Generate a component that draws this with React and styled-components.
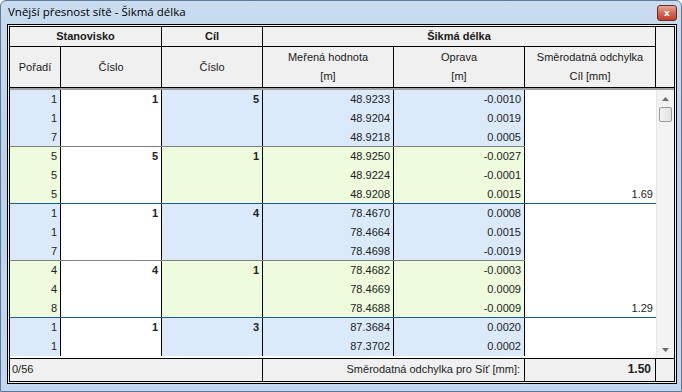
import React from 'react';
import styled, { createGlobalStyle } from 'styled-components';

const GlobalStyle = createGlobalStyle`
  html, body { margin: 0; padding: 0; }
  body {
    width: 682px;
    height: 392px;
    overflow: hidden;
    font-family: "Liberation Sans", "DejaVu Sans", sans-serif;
    font-size: 11px;
    color: #000;
  }
`;

const COLS = '51px 101px 101px 131px 131px 131px';
const TINT = { blue: '#dbeafb', green: '#eefbdd' };

const Window = styled.div`
  width: 682px;
  height: 392px;
  box-sizing: border-box;
  display: flex;
  flex-direction: column;
  border: 1px solid #5d7a99;
  border-radius: 6px 6px 0 0;
  background: linear-gradient(180deg, #c9dbef 0%, #bcd2ec 40%, #c3d7ee 100%);
`;

const TitleBar = styled.div`
  height: 22px;
  display: flex;
  align-items: center;
  justify-content: space-between;
  padding: 0 4px 0 7px;
  font-family: "Open Sans", "Liberation Sans", sans-serif;
  font-size: 11.5px;
  color: #000;
`;

const CloseButton = styled.div`
  width: 20px;
  height: 16px;
  margin-top: 2px;
  border: 1px solid #6d2a22;
  border-radius: 3px;
  box-sizing: border-box;
  background: linear-gradient(180deg, #e9a796 0%, #d26a55 50%, #c1412a 100%);
  display: flex;
  align-items: center;
  justify-content: center;
  color: #fff;
  font-family: "DejaVu Sans", sans-serif;
  font-size: 9px;
  font-weight: bold;
`;

const Client = styled.div`
  flex: 1;
  padding: 2px 7px 7px 6px;
  display: flex;
`;

const Frame = styled.div`
  flex: 1;
  border: 1px solid #000;
  padding: 1px;
  background: #f0f0f0;
  display: flex;
`;

const Table = styled.div`
  flex: 1;
  border: 1px solid #000;
  display: flex;
  flex-direction: column;
  background: #f0f0f0;
`;

const Header = styled.div`
  display: grid;
  grid-template-columns: ${COLS} 1fr;
  grid-template-rows: 20px 40px;
  border-bottom: 1px solid #000;
`;

const HeadCell = styled.div`
  display: flex;
  flex-direction: column;
  align-items: center;
  justify-content: center;
  border-right: 1px solid #000;
  border-bottom: ${p => (p.$top ? '1px solid #000' : 'none')};
  font-weight: ${p => (p.$bold ? 'bold' : 'normal')};
  grid-column: ${p => p.$col || 'auto'};
  grid-row: ${p => p.$row || 'auto'};
  line-height: 19px;
  color: #1a1a1a;
`;

const HeadEnd = styled.div`
  grid-column: 7;
  grid-row: 1 / 3;
`;

const Body = styled.div`
  height: 268px;
  border-top: 2px solid #a0a0a0;
  display: flex;
  overflow: hidden;
`;

const Rows = styled.div`
  width: 646px;
  background: #fff;
`;

const Group = styled.div`
  display: grid;
  grid-template-columns: ${COLS};
  grid-auto-rows: 19px;
  position: relative;
  &::after {
    content: '';
    position: absolute;
    left: 0;
    bottom: 0;
    height: 1px;
    width: ${p => (p.$sep === 'blue' ? '646px' : p.$sep === 'gray' ? '515px' : '0')};
    background: ${p => (p.$sep === 'blue' ? '#1b5a96' : '#808080')};
  }
`;

const Cell = styled.div`
  background: ${p => (p.$white ? '#fff' : TINT[p.$tint])};
  border-right: ${p => (p.$last ? 'none' : '1px solid #000')};
  text-align: right;
  padding: 0 3px 0 2px;
  line-height: 19px;
  font-weight: ${p => (p.$bold ? 'bold' : 'normal')};
  grid-column: ${p => p.$col};
  grid-row: ${p => p.$row || 'auto'};
  white-space: nowrap;
  color: #222;
`;

const Scrollbar = styled.div`
  width: 17px;
  background: #f3f3f3;
  border-left: 1px solid #e6e6e6;
  display: flex;
  flex-direction: column;
  align-items: center;
`;

const Arrow = styled.div`
  height: 17px;
  display: flex;
  align-items: center;
  justify-content: center;
`;

const Thumb = styled.div`
  width: 13px;
  height: 15px;
  border: 1px solid #9a9a9a;
  border-radius: 2px;
  background: linear-gradient(90deg, #f4f4f4, #e2e2e2);
  box-sizing: border-box;
`;

const Track = styled.div`
  flex: 1;
`;

const Footer = styled.div`
  display: grid;
  grid-template-columns: 253px 262px 131px 1fr;
  height: 22px;
  border-top: 1px solid #000;
`;

const FootCell = styled.div`
  border-right: ${p => (p.$last ? 'none' : '1px solid #000')};
  text-align: ${p => p.$align || 'left'};
  font-weight: ${p => (p.$bold ? 'bold' : 'normal')};
  font-size: ${p => (p.$bold ? '12px' : '11px')};
  line-height: 21px;
  padding: 0 4px 0 2px;
  color: #222;
`;

const groups = [
  { st: 1, cil: 5, tint: 'blue', sep: 'gray', sd: '', rows: [[1, '48.9233', '-0.0010'], [1, '48.9204', '0.0019'], [7, '48.9218', '0.0005']] },
  { st: 5, cil: 1, tint: 'green', sep: 'blue', sd: '1.69', rows: [[5, '48.9250', '-0.0027'], [5, '48.9224', '-0.0001'], [5, '48.9208', '0.0015']] },
  { st: 1, cil: 4, tint: 'blue', sep: 'gray', sd: '', rows: [[1, '78.4670', '0.0008'], [1, '78.4664', '0.0015'], [7, '78.4698', '-0.0019']] },
  { st: 4, cil: 1, tint: 'green', sep: 'blue', sd: '1.29', rows: [[4, '78.4682', '-0.0003'], [4, '78.4669', '0.0009'], [8, '78.4688', '-0.0009']] },
  { st: 1, cil: 3, tint: 'blue', sep: '', sd: '', rows: [[1, '87.3684', '0.0020'], [1, '87.3702', '0.0002']] },
];

const ArrowIcon = ({ up }) => (
  <svg width="7" height="4" viewBox="0 0 7 4">
    <path d={up ? 'M0 4 L3.5 0 L7 4 Z' : 'M0 0 L3.5 4 L7 0 Z'} fill="#6a6a6a" />
  </svg>
);

const GroupRows = ({ g }) => {
  const span = `1 / ${g.rows.length + 1}`;
  return (
    <Group $sep={g.sep}>
      <Cell $white $bold $col={2} $row={span}>{g.st}</Cell>
      <Cell $tint={g.tint} $bold $col={3} $row={span}>{g.cil}</Cell>
      {g.rows.map((r, i) => (
        <React.Fragment key={i}>
          <Cell $tint={g.tint} $col={1} $row={i + 1}>{r[0]}</Cell>
          <Cell $tint={g.tint} $col={4} $row={i + 1}>{r[1]}</Cell>
          <Cell $tint={g.tint} $col={5} $row={i + 1}>{r[2]}</Cell>
          <Cell $white $last $col={6} $row={i + 1}>{i === g.rows.length - 1 ? g.sd : ''}</Cell>
        </React.Fragment>
      ))}
    </Group>
  );
};

export default function App() {
  return (
    <>
      <GlobalStyle />
      <Window>
        <TitleBar>
          <span>Vnější přesnost sítě - Šikmá délka</span>
          <CloseButton>x</CloseButton>
        </TitleBar>
        <Client>
          <Frame>
            <Table>
              <Header>
                <HeadCell $top $bold $col="1 / 3" $row={1}>Stanovisko</HeadCell>
                <HeadCell $top $bold $col={3} $row={1}>Cíl</HeadCell>
                <HeadCell $top $bold $col="4 / 7" $row={1}>Šikmá délka</HeadCell>
                <HeadEnd />
                <HeadCell $col={1} $row={2}>Pořadí</HeadCell>
                <HeadCell $col={2} $row={2}>Číslo</HeadCell>
                <HeadCell $col={3} $row={2}>Číslo</HeadCell>
                <HeadCell $col={4} $row={2}><span>Meřená hodnota</span><span>[m]</span></HeadCell>
                <HeadCell $col={5} $row={2}><span>Oprava</span><span>[m]</span></HeadCell>
                <HeadCell $col={6} $row={2}><span>Směrodatná odchylka</span><span>Cíl [mm]</span></HeadCell>
              </Header>
              <Body>
                <Rows>
                  {groups.map((g, i) => <GroupRows key={i} g={g} />)}
                </Rows>
                <Scrollbar>
                  <Arrow><ArrowIcon up /></Arrow>
                  <Thumb />
                  <Track />
                  <Arrow><ArrowIcon /></Arrow>
                </Scrollbar>
              </Body>
              <Footer>
                <FootCell>0/56</FootCell>
                <FootCell $align="right">Směrodatná odchylka pro Síť [mm]:</FootCell>
                <FootCell $align="right" $bold>1.50</FootCell>
                <FootCell $last />
              </Footer>
            </Table>
          </Frame>
        </Client>
      </Window>
    </>
  );
}
